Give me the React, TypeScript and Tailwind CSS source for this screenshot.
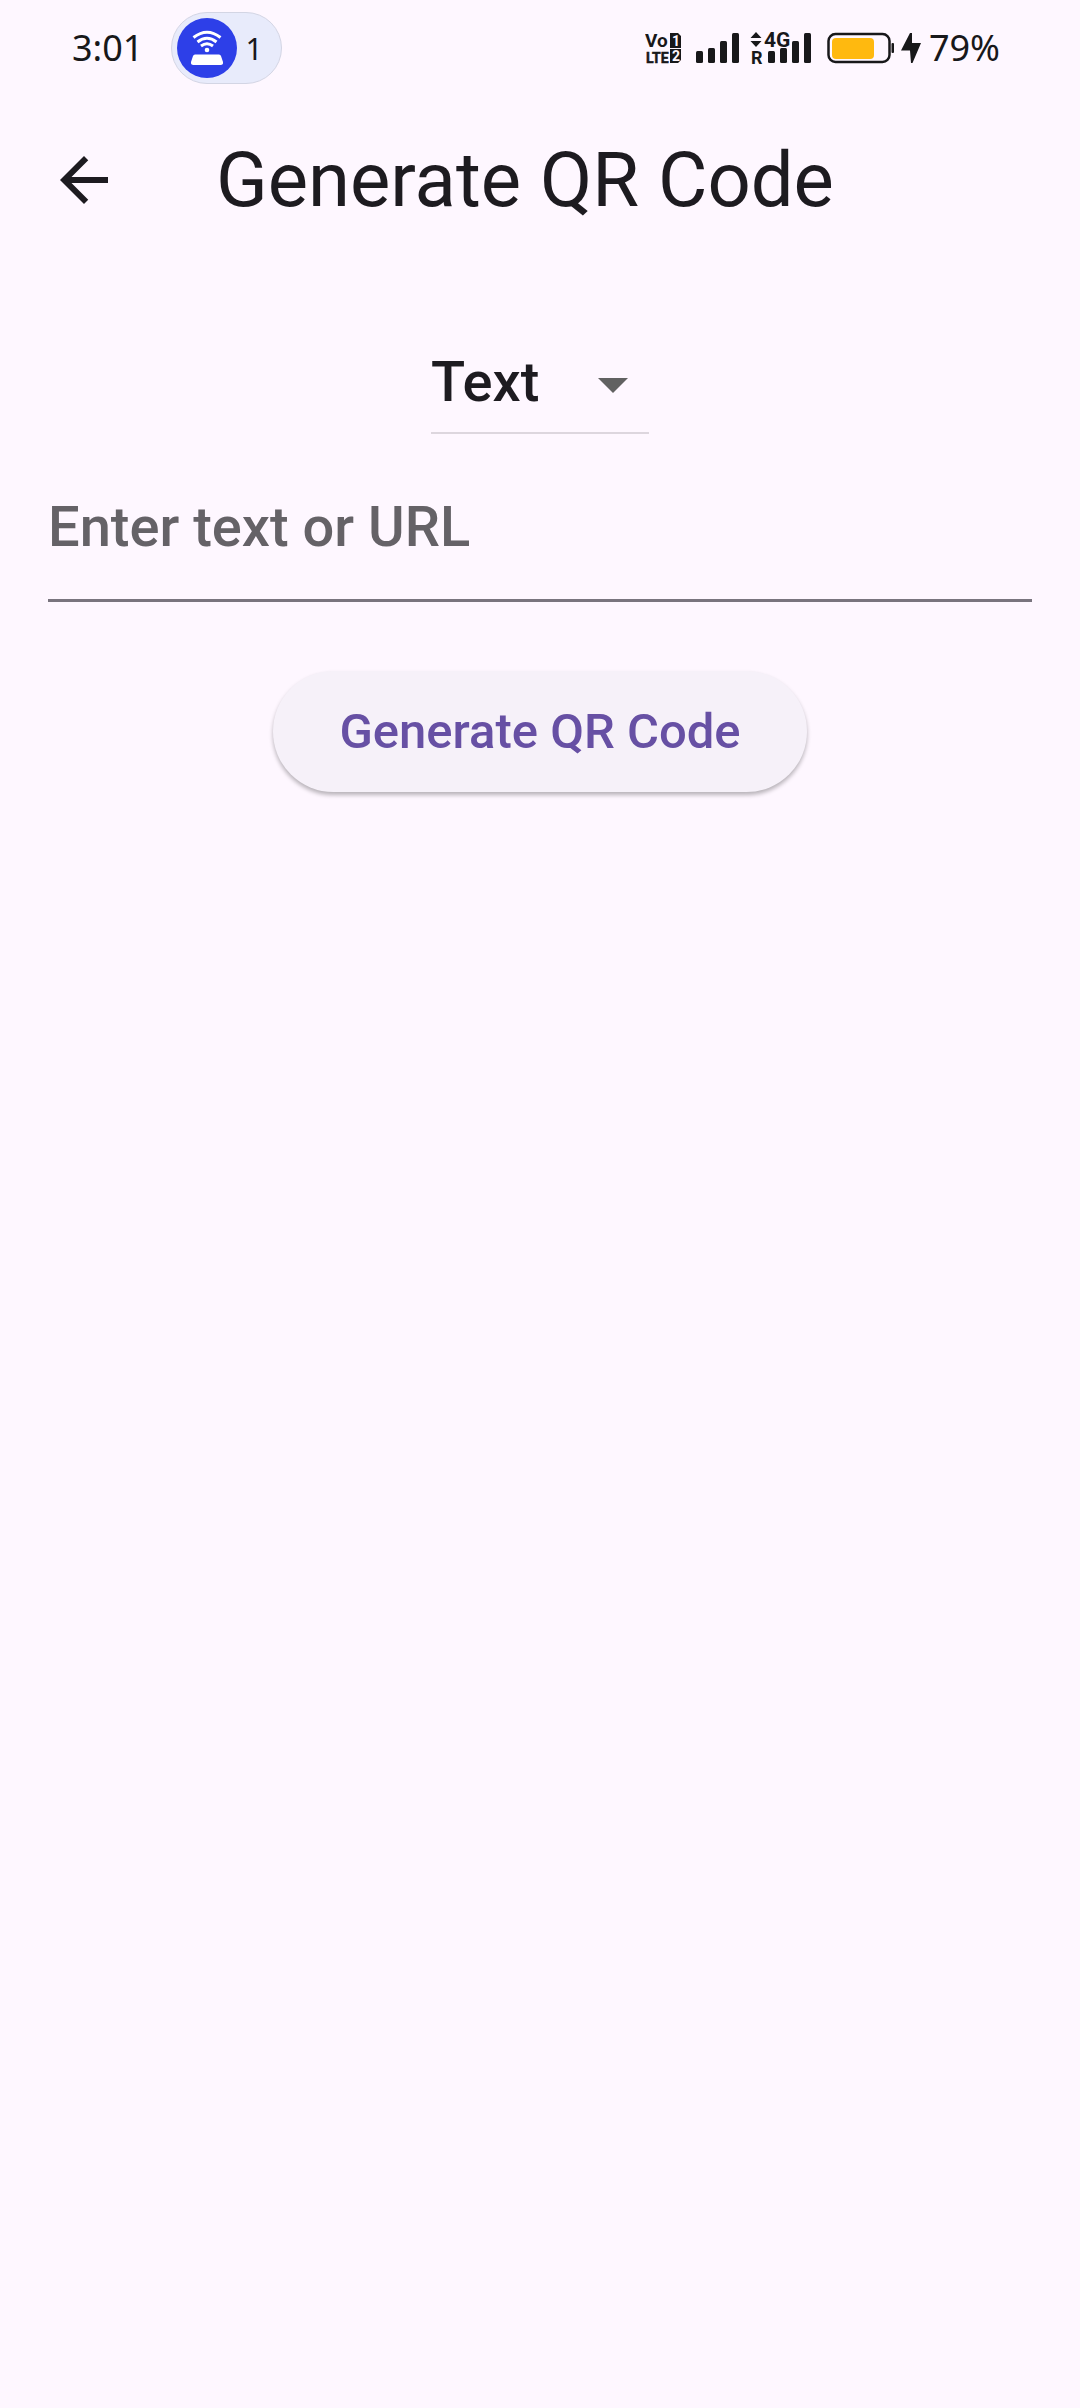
import { useState } from "react";

const ink = "#18181a";
const narrow = "'Liberation Sans Narrow', Roboto, sans-serif";

function HotspotIcon() {
  return (
    <svg className="shrink-0" width="60" height="60" viewBox="0 0 60 60" aria-hidden="true">
      <circle cx="30" cy="30" r="30" fill="#2d3fe8" />
      <g fill="none" stroke="#fff" strokeWidth="3">
        <path d="M16.500 19.500Q30 9 43.500 19.500" />
        <path d="M20.500 24Q30 16.500 39.500 24" />
        <path d="M24 28Q30 23.500 36 28" />
      </g>
      <circle cx="30" cy="32" r="2.300" fill="#fff" />
      <path d="M18 36.500H42Q43.500 36.500 44 38L46 44Q46.500 47 43.500 47H16.500Q13.500 47 14 44L16 38Q16.500 36.500 18 36.500Z" fill="#fff" />
    </svg>
  );
}

function VolteIcon() {
  return (
    <svg width="36" height="48" viewBox="0 -9 36 48" fill={ink} fontFamily={narrow} fontWeight="700" aria-label="VoLTE">
      <text x="0" y="14" fontSize="19">Vo</text>
      <text x="1" y="30" fontSize="14" stroke={ink} strokeWidth="0.500">LTE</text>
      <path d="M25 0H33L36 3V15H25ZM25 16H36V27L33 30H25Z" />
      <text x="27" y="13" fontSize="14" fill="#fef7ff">1</text>
      <text x="27" y="28" fontSize="14" fill="#fef7ff">2</text>
    </svg>
  );
}

function SignalIcon() {
  return (
    <svg width="43" height="30" viewBox="0 0 43 30" fill={ink} aria-hidden="true">
      <rect x="0" y="18" width="7" height="12" rx="1.500" />
      <rect x="12" y="15" width="7" height="15" rx="1.500" />
      <rect x="24" y="8" width="7" height="22" rx="1.500" />
      <rect x="36" y="0" width="7" height="30" rx="1.500" />
    </svg>
  );
}

function RoamingSignalIcon() {
  return (
    <svg width="62" height="50" viewBox="0 -8 62 50" fill={ink} fontWeight="700" aria-label="4G roaming">
      <path d="M6 1L11.500 7H0.500ZM0.500 10H11.500L6 16Z" />
      <text x="14" y="16" fontSize="21" fontFamily={narrow}>4G</text>
      <text x="1" y="33" fontSize="18" fontFamily={narrow}>R</text>
      <rect x="18" y="20" width="7" height="12" rx="1.500" />
      <rect x="30" y="17" width="7" height="15" rx="1.500" />
      <rect x="42" y="10" width="7" height="22" rx="1.500" />
      <rect x="54" y="2" width="7" height="30" rx="1.500" />
    </svg>
  );
}

function BatteryIcon() {
  return (
    <svg width="68" height="32" viewBox="0 0 68 32" aria-hidden="true">
      <rect x="1.500" y="2" width="61" height="28" rx="7" fill="none" stroke={ink} strokeWidth="2.500" />
      <rect x="5" y="6" width="42" height="21" rx="4" fill="#ffb90f" />
      <rect x="64.500" y="11" width="2.500" height="10" rx="1" fill={ink} />
    </svg>
  );
}

function BoltIcon() {
  return (
    <svg width="20" height="30" viewBox="0 0 20 30" fill={ink} aria-hidden="true">
      <path d="M9 0L0 17.500H9L10 30H11.500L20 10H11V0Z" />
    </svg>
  );
}

function StatusBar() {
  return (
    <div className="flex h-24 items-center justify-between pl-[72px] pr-20 font-['Noto_Sans',sans-serif] text-[36px] text-[#18181a]">
      <div className="flex items-center gap-7">
        <span>3:01</span>
        <div className="flex h-[72px] w-[111px] items-center gap-2 rounded-full border border-[#d3d5e4] bg-[#e8ebfb] pl-[5px]">
          <HotspotIcon />
          <span className="text-[30px]">1</span>
        </div>
      </div>
      <div className="flex items-center">
        <div className="flex items-center gap-[15px]">
          <VolteIcon />
          <SignalIcon />
        </div>
        <div className="flex items-center gap-[15px] pl-[11px]">
          <RoamingSignalIcon />
          <BatteryIcon />
        </div>
        <div className="flex items-center gap-2 pl-[6px]">
          <BoltIcon />
          <span>79%</span>
        </div>
      </div>
    </div>
  );
}

export default function App() {
  const [kind, setKind] = useState("Text");
  const [value, setValue] = useState("");
  return (
    <div className="min-h-screen bg-[#fef7ff] font-[Roboto,sans-serif] text-[#1d1b20]">
      <StatusBar />
      <header className="flex h-[168px] items-center">
        <button type="button" aria-label="Back" className="flex w-[168px] justify-center">
          <svg width="72" height="72" viewBox="0 0 24 24" fill="currentColor" aria-hidden="true">
            <path d="M20 11H7.830l5.590-5.590L12 4l-8 8 8 8 1.410-1.410L7.830 13H20v-2z" />
          </svg>
        </button>
        <h1 className="pl-12 text-[76px] leading-none">Generate QR Code</h1>
      </header>
      <main className="flex flex-col items-center px-12 pt-12">
        <div className="relative border-b-2 border-[#ddd6de]">
          <select
            aria-label="Content type"
            value={kind}
            onChange={(e) => setKind(e.target.value)}
            className="h-[120px] w-[218px] appearance-none bg-transparent pt-5 text-[56px] font-medium outline-none"
          >
            <option>Text</option>
            <option>URL</option>
          </select>
          <svg className="pointer-events-none absolute right-0 top-9" width="72" height="72" viewBox="0 0 24 24" fill="#616161" aria-hidden="true">
            <path d="M7 10l5 5 5-5z" />
          </svg>
        </div>
        <input
          aria-label="Enter text or URL"
          placeholder="Enter text or URL"
          value={value}
          onChange={(e) => setValue(e.target.value)}
          className="h-[168px] w-full border-b-3 border-[#79747e] bg-transparent pt-5 text-[56px] font-medium outline-none placeholder:text-[#656267] placeholder:opacity-100"
        />
        <button
          type="button"
          className="mt-[69px] h-[121px] rounded-full bg-[#f6f1f9] px-[66px] text-[49px] font-medium text-[#6750a4] shadow-[0_3px_4px_rgba(0,0,0,0.28)]"
        >
          Generate QR Code
        </button>
      </main>
    </div>
  );
}
